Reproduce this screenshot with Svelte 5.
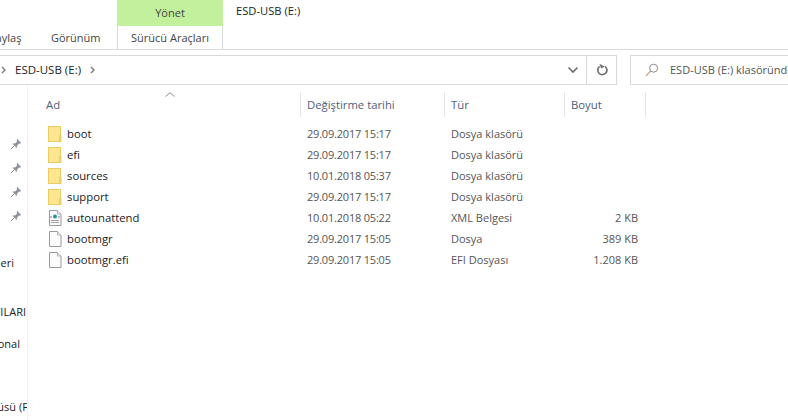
<script>
	const pins = [0, 1, 2, 3];

	const files = [
		{ name: 'boot', date: '29.09.2017 15:17', type: 'Dosya klasörü', size: '', icon: 'folder' },
		{ name: 'efi', date: '29.09.2017 15:17', type: 'Dosya klasörü', size: '', icon: 'folder' },
		{ name: 'sources', date: '10.01.2018 05:37', type: 'Dosya klasörü', size: '', icon: 'folder' },
		{ name: 'support', date: '29.09.2017 15:17', type: 'Dosya klasörü', size: '', icon: 'folder' },
		{ name: 'autounattend', date: '10.01.2018 05:22', type: 'XML Belgesi', size: '2 KB', icon: 'xml' },
		{ name: 'bootmgr', date: '29.09.2017 15:05', type: 'Dosya', size: '389 KB', icon: 'file' },
		{ name: 'bootmgr.efi', date: '29.09.2017 15:05', type: 'EFI Dosyası', size: '1.208 KB', icon: 'file' }
	];
</script>

<div class="window">
	<header class="ribbon">
		<div class="tabs">
			<span class="tab share">Paylaş</span>
			<span class="tab view">Görünüm</span>
			<div class="context">
				<div class="manage">Yönet</div>
				<div class="tools">Sürücü Araçları</div>
			</div>
			<div class="title">ESD-USB (E:)</div>
		</div>
	</header>

	<div class="toolbar">
		<div class="address">
			<svg class="crumb first" width="6" height="8" viewBox="0 0 6 8"><path d="M1 1l3 3-3 3" fill="none" stroke="#7a7a7a" stroke-width="1.4" /></svg>
			<span class="path">ESD-USB (E:)</span>
			<svg class="crumb" width="6" height="8" viewBox="0 0 6 8"><path d="M1 1l3 3-3 3" fill="none" stroke="#7a7a7a" stroke-width="1.4" /></svg>
			<svg class="chevron" width="12" height="8" viewBox="0 0 12 8"><path d="M1.5 1.5L6 6l4.5-4.5" fill="none" stroke="#6d6d6d" stroke-width="1.6" /></svg>
			<div class="refresh">
				<svg width="13" height="14" viewBox="0 0 13 14">
					<path d="M3.6 3.4A4.6 4.6 0 1 0 9 3.3" fill="none" stroke="#6d6d6d" stroke-width="1.6" />
					<path d="M3.4 0.8L8.6 3.4 5.2 5.4z" fill="#6d6d6d" />
				</svg>
			</div>
		</div>
		<div class="search">
			<svg width="14" height="14" viewBox="0 0 14 14">
				<circle cx="8.6" cy="5.2" r="4" fill="none" stroke="#8c8c8c" />
				<path d="M5.6 8L1 12.8" stroke="#c9a27c" stroke-width="1.2" />
			</svg>
			<span>ESD-USB (E:) klasöründe ara</span>
		</div>
	</div>

	<div class="body">
		<nav class="nav">
			<div class="pins">
				{#each pins as p (p)}
					<svg width="12" height="12" viewBox="0 0 12 12">
						<path d="M7 .8l4.2 4.2-1.2.7-.9-.3-2 2 .1 1.6-.8.8L2.700 6.100l.8-.8 1.600.1 2-2-.3-.9z" fill="#8b939b" />
						<path d="M4.300 7.700L1 11" stroke="#8b939b" />
					</svg>
				{/each}
			</div>
			<div class="nav-item i1"><span>Resimleri</span></div>
			<div class="nav-item i2"><span>BAĞLANTILARI</span></div>
			<div class="nav-item i3"><span>Personal</span></div>
			<div class="nav-item i4"><span>Sürücüsü (F:)</span></div>
		</nav>

		<main class="list">
			<div class="sort">
				<svg width="10" height="5" viewBox="0 0 10 5"><path d="M.5 4.500L5 .7l4.500 3.800" fill="none" stroke="#8a8a8a" /></svg>
			</div>
			<div class="row head">
				<div class="c name">Ad</div>
				<div class="c date">Değiştirme tarihi</div>
				<div class="c type">Tür</div>
				<div class="c size">Boyut</div>
			</div>
			<div class="rows">
				{#each files as f (f.name)}
					<div class="row">
						<div class="c name">
							{#if f.icon === 'folder'}
								<svg class="icon" width="14" height="16" viewBox="0 0 14 16">
									<rect x=".5" y=".5" width="12" height="15" fill="#fde68f" stroke="#eccb62" />
									<path d="M13 9.500h-1.500v6H13z" fill="#f9dc7d" stroke="#eccb62" />
								</svg>
							{:else}
								<svg class="icon" width="14" height="16" viewBox="0 0 14 16">
									<path d="M1.500.5h8l3.500 3.500v11.500H1.500z" fill="#fcfcfc" stroke="#9a9a9a" />
									<path d="M9.500.5V4H13" fill="#eee" stroke="#b5b5b5" />
									{#if f.icon === 'xml'}
										<circle cx="7" cy="6.500" r="2" fill="#1f9b95" />
										<path d="M3.500 6.500l-1 .5 1 .5M10.500 6.500l1 .5-1 .5" fill="none" stroke="#777" />
										<path d="M3 10.500h8M3 12.500h8" stroke="#a5a5a5" />
									{/if}
								</svg>
							{/if}
							<span class="fname">{f.name}</span>
						</div>
						<div class="c date stamp">{f.date}</div>
						<div class="c type">{f.type}</div>
						<div class="c size num">{f.size}</div>
					</div>
				{/each}
			</div>
		</main>
	</div>
</div>

<style>
	:global(body) {
		margin: 0;
		background: #fff;
		font-family: 'Open Sans', 'Noto Sans', sans-serif;
	}

	.window {
		width: 788px;
		height: 420px;
		overflow: hidden;
		font-size: 11px;
		color: #1b1b1b;
	}

	.ribbon {
		height: 49px;
		border-bottom: 1px solid #dadbdc;
	}

	.tabs {
		display: flex;
		height: 44px;
		margin-left: -11px;
	}

	.tab {
		align-self: flex-end;
		line-height: 14px;
		height: 14px;
		margin-bottom: -1px;
		color: #444;
	}

	.share {
		width: 62px;
	}

	.view {
		width: 66px;
	}

	.context {
		width: 106px;
		display: flex;
		flex-direction: column;
		text-align: center;
	}

	.manage {
		height: 26px;
		line-height: 26px;
		background: #c2f09c;
		color: #444;
	}

	.tools {
		flex: 1;
		line-height: 24px;
		color: #444;
		border-left: 1px solid #d9d9d9;
		border-right: 1px solid #d9d9d9;
	}

	.title {
		padding: 3px 0 0 13px;
		line-height: 16px;
		color: #222;
		font-size: 11.200px;
	}

	.toolbar {
		display: flex;
		gap: 13px;
		margin-top: 5px;
		height: 30px;
	}

	.address {
		width: 617px;
		box-sizing: border-box;
		display: flex;
		align-items: center;
		border: 1px solid #d9d9d9;
		border-left: 0;
		height: 30px;
	}

	.crumb.first {
		margin-left: 1px;
	}

	.path {
		margin: -2px 9px 0 8px;
		color: #222;
		font-size: 11.500px;
	}

	.chevron {
		margin-left: auto;
		margin-right: 7px;
	}

	.refresh {
		width: 30px;
		height: 100%;
		box-sizing: border-box;
		padding-left: 2px;
		border-left: 1px solid #d9d9d9;
		display: flex;
		align-items: center;
		justify-content: center;
	}

	.search {
		flex: 1;
		box-sizing: border-box;
		height: 30px;
		border: 1px solid #d9d9d9;
		border-right: 0;
		display: flex;
		align-items: center;
		gap: 11px;
		padding-left: 14px;
		white-space: nowrap;
		overflow: hidden;
		color: #555;
	}

	.search svg {
		flex: none;
	}

	.search span {
		margin-top: -2px;
	}

	.body {
		display: flex;
		height: 335px;
	}

	.nav {
		width: 27px;
		flex: none;
		border-right: 1px solid #f0f0f0;
		position: relative;
		overflow: hidden;
		color: #222;
	}

	.pins {
		position: absolute;
		left: 10px;
		top: 53px;
		display: flex;
		flex-direction: column;
		gap: 12px;
	}

	.pins svg {
		display: block;
	}

	.nav-item {
		position: absolute;
		line-height: 16px;
		white-space: nowrap;
	}

	.i1 { top: 170px; right: 13px; }
	.i2 { top: 219px; right: 1px; }
	.i3 { top: 251px; right: 7px; }
	.i4 { top: 314px; right: -7px; }

	.list {
		flex: 1;
		position: relative;
	}

	.sort {
		position: absolute;
		left: 137px;
		top: 7px;
		line-height: 0;
	}

	.row {
		display: grid;
		grid-template-columns: 273px 144px 120px 81px;
		height: 21px;
		align-items: center;
		color: #555;
	}

	.head {
		height: 25px;
		margin-top: 7px;
		color: #4c607a;
		font-size: 11.300px;
	}

	.head .c {
		height: 25px;
		line-height: 25px;
		border-right: 1px solid #e5e5e5;
		box-sizing: border-box;
		padding-left: 6px;
	}

	.head .name {
		padding-left: 18px;
	}

	.rows {
		margin-top: 6px;
	}

	.c {
		white-space: nowrap;
		padding-left: 6px;
	}

	.stamp {
		letter-spacing: -0.2px;
	}

	.name {
		display: flex;
		align-items: center;
		padding-left: 20px;
	}

	.icon {
		flex: none;
	}

	.fname {
		margin-left: 5px;
		color: #1b1b1b;
		font-size: 11.300px;
	}

	.num {
		text-align: right;
		padding-right: 8px;
	}
</style>
